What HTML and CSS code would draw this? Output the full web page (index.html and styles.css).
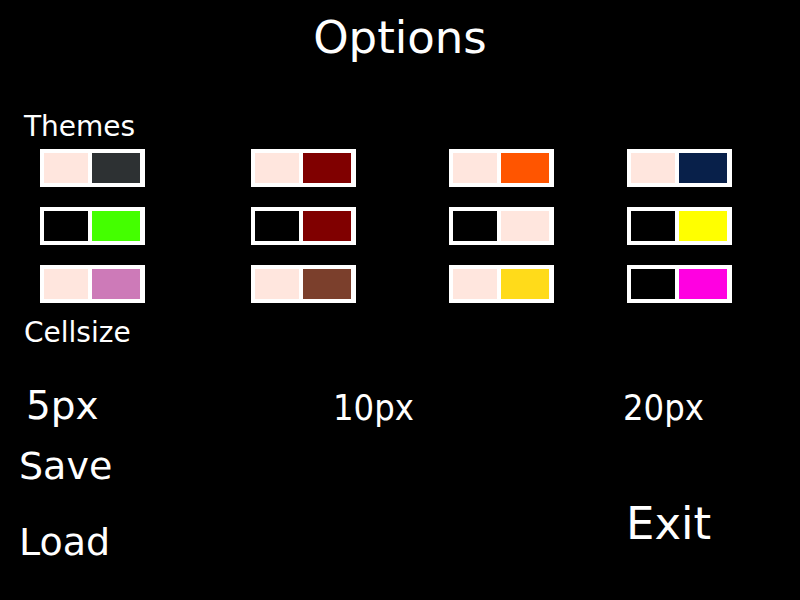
FILE: index.html
```html
<!DOCTYPE html>
<html lang="en">
<head>
<meta charset="utf-8">
<meta name="viewport" content="width=device-width, initial-scale=1">
<title>Options</title>
<link rel="stylesheet" href="styles.css">
</head>
<body>
<main class="options">
  <h1 class="title">Options</h1>

  <section>
    <h2 class="heading">Themes</h2>
    <div class="themes">
      <button class="theme" type="button" aria-label="Charcoal"><span class="ink blush"></span><span class="ink charcoal"></span></button>
      <button class="theme" type="button" aria-label="Maroon"><span class="ink blush"></span><span class="ink maroon"></span></button>
      <button class="theme" type="button" aria-label="Orange"><span class="ink blush"></span><span class="ink orange"></span></button>
      <button class="theme" type="button" aria-label="Navy"><span class="ink blush"></span><span class="ink navy"></span></button>
      <button class="theme" type="button" aria-label="Green on black"><span class="ink black"></span><span class="ink green"></span></button>
      <button class="theme" type="button" aria-label="Maroon on black"><span class="ink black"></span><span class="ink maroon"></span></button>
      <button class="theme" type="button" aria-label="Blush on black"><span class="ink black"></span><span class="ink blush"></span></button>
      <button class="theme" type="button" aria-label="Yellow on black"><span class="ink black"></span><span class="ink yellow"></span></button>
      <button class="theme" type="button" aria-label="Orchid"><span class="ink blush"></span><span class="ink orchid"></span></button>
      <button class="theme" type="button" aria-label="Brown"><span class="ink blush"></span><span class="ink brown"></span></button>
      <button class="theme" type="button" aria-label="Gold"><span class="ink blush"></span><span class="ink gold"></span></button>
      <button class="theme" type="button" aria-label="Magenta on black"><span class="ink black"></span><span class="ink magenta"></span></button>
    </div>
  </section>

  <section>
    <h2 class="heading">Cellsize</h2>
    <div class="sizes">
      <button class="choice" type="button">5px</button>
      <button class="choice narrow" type="button">10px</button>
      <button class="choice narrow" type="button">20px</button>
    </div>
  </section>

  <div class="actions">
    <div class="files">
      <button class="file" type="button">Save</button>
      <button class="file" type="button">Load</button>
    </div>
    <button class="exit" type="button">Exit</button>
  </div>
</main>
</body>
</html>
```
FILE: styles.css
```css
* {
  box-sizing: border-box;
}

body {
  margin: 0;
  background: #000;
  color: #fff;
  font-family: "DejaVu Sans", sans-serif;
}

button {
  margin: 0;
  padding: 0;
  border: 0;
  background: none;
  color: inherit;
  font-family: inherit;
  text-align: left;
  cursor: pointer;
}

.options {
  padding-top: 12px;
}

.title {
  margin: 0 0 47px;
  font-size: 45px;
  line-height: 52px;
  font-weight: 400;
  text-align: center;
}

.heading {
  margin: 0;
  padding-left: 24px;
  font-size: 28px;
  line-height: 32px;
  font-weight: 400;
}

.themes {
  display: grid;
  grid-template-columns: 211fr 198fr 178fr 173fr;
  row-gap: 20px;
  justify-items: start;
  padding: 6px 0 14px 40px;
}

.theme {
  display: grid;
  grid-template-columns: 44px 48px;
  column-gap: 4px;
  height: 38px;
  padding: 4px 5px 4px 4px;
  background: #fff;
}

.blush { background: #ffe6de; }
.black { background: #000; }
.charcoal { background: #2d3133; }
.maroon { background: #800000; }
.orange { background: #ff5500; }
.navy { background: #08204a; }
.green { background: #44ff00; }
.yellow { background: #ffff00; }
.orchid { background: #cd7ab8; }
.brown { background: #7b3f2c; }
.gold { background: #ffdb1a; }
.magenta { background: #ff00e1; }

.sizes {
  display: grid;
  grid-template-columns: 307fr 290fr 177fr;
  align-items: start;
  padding: 35px 0 12px 26px;
}

.choice {
  font-size: 39px;
  line-height: 44px;
}

.narrow {
  font-family: "DejaVu Sans Condensed", "DejaVu Sans", sans-serif;
  font-size: 36px;
  line-height: 48px;
}

.actions {
  display: grid;
  grid-template-columns: 607fr 174fr;
  padding-left: 19px;
}

.files {
  display: grid;
  row-gap: 32px;
  justify-items: start;
}

.file {
  font-size: 38px;
  line-height: 44px;
}

.exit {
  align-self: end;
  justify-self: start;
  padding-bottom: 14px;
  font-size: 45px;
  line-height: 52px;
}
```
